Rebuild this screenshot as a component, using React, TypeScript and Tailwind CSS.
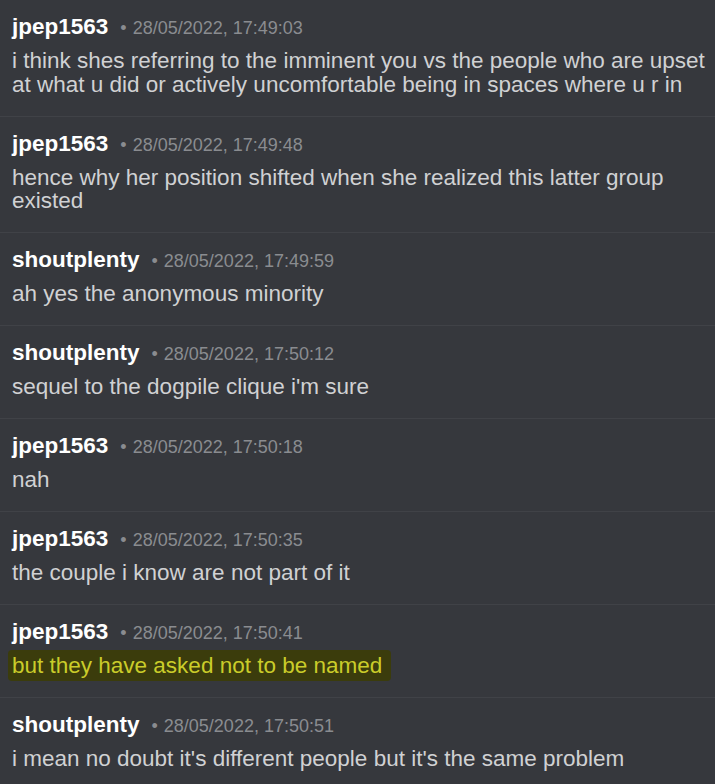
import React from "react";

interface Message {
  author: string;
  time: string;
  text: string;
  highlight?: boolean;
}

const messages: Message[] = [
  {
    author: "jpep1563",
    time: "28/05/2022, 17:49:03",
    text: "i think shes referring to the imminent you vs the people who are upset at what u did or actively uncomfortable being in spaces where u r in",
  },
  {
    author: "jpep1563",
    time: "28/05/2022, 17:49:48",
    text: "hence why her position shifted when she realized this latter group existed",
  },
  { author: "shoutplenty", time: "28/05/2022, 17:49:59", text: "ah yes the anonymous minority" },
  { author: "shoutplenty", time: "28/05/2022, 17:50:12", text: "sequel to the dogpile clique i'm sure" },
  { author: "jpep1563", time: "28/05/2022, 17:50:18", text: "nah" },
  { author: "jpep1563", time: "28/05/2022, 17:50:35", text: "the couple i know are not part of it" },
  {
    author: "jpep1563",
    time: "28/05/2022, 17:50:41",
    text: "but they have asked not to be named",
    highlight: true,
  },
  {
    author: "shoutplenty",
    time: "28/05/2022, 17:50:51",
    text: "i mean no doubt it's different people but it's the same problem",
  },
];

function MessageRow({ message }: { message: Message }) {
  return (
    <div className="border-b border-[#404247] pl-3 pr-[4px] pt-[12px] pb-[19.5px]">
      <div className="flex h-[30px] items-baseline">
        <span className="text-[22.5px] font-bold leading-[30px] text-white">{message.author}</span>
        <span className="ml-[12px] text-[18px] leading-[30px] text-[#8a8c90]">•</span>
        <span className="ml-[6px] text-[18px] leading-[30px] text-[#8a8c90]">{message.time}</span>
      </div>
      <p className="mt-[7px] text-[22.5px] leading-[23.5px] text-[#d0d1d3]">
        {message.highlight ? (
          <span className="-ml-[4px] rounded-[4px] bg-[#3b3c0c] py-[3px] pl-[4px] pr-[9px] text-[#cacc2a]">
            {message.text}
          </span>
        ) : (
          message.text
        )}
      </p>
    </div>
  );
}

export default function App() {
  return (
    <div
      className="h-[784px] w-[715px] overflow-hidden bg-[#36383d]"
      style={{ fontFamily: '"Liberation Sans", Arial, sans-serif' }}
    >
      <div className="-mt-[1px] border-t border-[#404247]">
        {messages.map((m, i) => (
          <MessageRow key={i} message={m} />
        ))}
      </div>
    </div>
  );
}
